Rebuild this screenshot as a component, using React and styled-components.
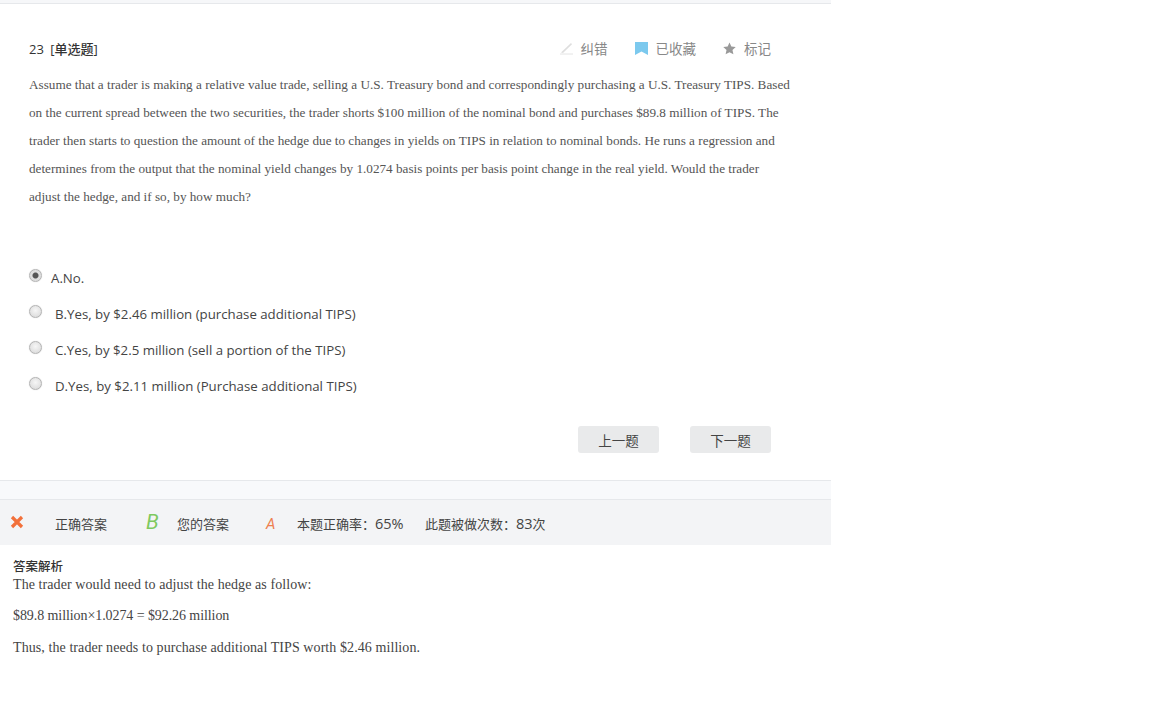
import styled, { createGlobalStyle } from 'styled-components'

const GlobalStyle = createGlobalStyle`
	html, body {
		margin: 0;
		padding: 0;
		background: #fff;
	}
	body {
		font-family: "Open Sans", "Noto Sans CJK SC", sans-serif;
		color: #333;
	}
`

const options = [
	{ id: 'A', text: 'A.No.', checked: true },
	{ id: 'B', text: 'B.Yes, by $2.46 million (purchase additional TIPS)' },
	{ id: 'C', text: 'C.Yes, by $2.5 million (sell a portion of the TIPS)' },
	{ id: 'D', text: 'D.Yes, by $2.11 million (Purchase additional TIPS)' },
]

function App() {
	return (
		<Page>
			<GlobalStyle />
			<TopBar />
			<Question>
				<Header>
					<Title>
						23 <b>[单选题]</b>
					</Title>
					<Tools>
						<Tool>
							<svg width="13" height="14" viewBox="0 0 13 14">
								<path d="M0 13h13" stroke="#e4e4e4" strokeWidth="1" />
								<path d="M1 11.500L11 2l1 1.200L3 12z" fill="#dedede" />
							</svg>
							<ToolLabel>纠错</ToolLabel>
						</Tool>
						<Tool>
							<svg width="13" height="13" viewBox="0 0 13 13">
								<path d="M0 0h13v13L6.500 9.500 0 13z" fill="#7cc9ee" />
							</svg>
							<ToolLabel>已收藏</ToolLabel>
						</Tool>
						<Tool>
							<svg width="13" height="13" viewBox="0 0 24 24">
								<path
									d="M12 1l3.400 7.400 8.100.9-6 5.500 1.700 8L12 18.700 4.800 22.800l1.700-8-6-5.500 8.100-.9z"
									fill="#999"
								/>
							</svg>
							<ToolLabel>标记</ToolLabel>
						</Tool>
					</Tools>
				</Header>
				<Stem>
					Assume that a trader is making a relative value trade, selling a U.S. Treasury bond and
					correspondingly purchasing a U.S. Treasury TIPS. Based on the current spread between the
					two securities, the trader shorts $100 million of the nominal bond and purchases $89.8
					million of TIPS. The trader then starts to question the amount of the hedge due to changes
					in yields on TIPS in relation to nominal bonds. He runs a regression and determines from
					the output that the nominal yield changes by 1.0274 basis points per basis point change in
					the real yield. Would the trader adjust the hedge, and if so, by how much?
				</Stem>
				<Options>
					{options.map(o => (
						<Option key={o.id}>
							<Radio type="radio" name="answer" defaultChecked={o.checked} />
							<OptionText $checked={o.checked}>{o.text}</OptionText>
						</Option>
					))}
				</Options>
				<Pager>
					<PageBtn>上一题</PageBtn>
					<PageBtn>下一题</PageBtn>
				</Pager>
			</Question>
			<Divider />
			<ResultBar>
				<ResultMark $width={45} $lift={-1}>
					<svg width="14" height="14" viewBox="0 0 14 14">
						<path d="M2 2l10 10M12 2L2 12" stroke="#f2703a" strokeWidth="3.200" />
					</svg>
				</ResultMark>
				<ResultLabel $width={91}>正确答案</ResultLabel>
				<ResultMark $color="#7ec95f" $size={21} $width={31} $lift={-2}>B</ResultMark>
				<ResultLabel $width={89}>您的答案</ResultLabel>
				<ResultMark $color="#ee7f4f" $size={15} $width={31} $lift={3}>A</ResultMark>
				<ResultLabel $width={128}>本题正确率：<Num>65%</Num></ResultLabel>
				<ResultLabel>此题被做次数：<Num>83</Num>次</ResultLabel>
			</ResultBar>
			<Analysis>
				<AnalysisTitle>答案解析</AnalysisTitle>
				<AnalysisText>The trader would need to adjust the hedge as follow:</AnalysisText>
				<AnalysisText $tight>$89.8 million×1.0274 = $92.26 million</AnalysisText>
				<AnalysisText>Thus, the trader needs to purchase additional TIPS worth $2.46 million.</AnalysisText>
			</Analysis>
		</Page>
	)
}
export default App

const Page = styled.div`
	width: 831px;
	height: 701px;
	overflow: hidden;
`
const TopBar = styled.div`
	height: 3px;
	background: #f6f7f9;
	border-bottom: 1px solid #e6e8eb;
`
const Question = styled.section`
	padding: 34px 0 27px 29px;
`
const Header = styled.div`
	display: flex;
	justify-content: space-between;
	align-items: center;
	height: 20px;
	padding-right: 60px;
`
const Title = styled.div`
	font-size: 13px;
	color: #333;
	b {
		font-weight: 500;
		margin-left: 3px;
	}
`
const Tools = styled.div`
	display: flex;
	align-items: center;
	gap: 27px;
`
const Tool = styled.span`
	display: flex;
	align-items: center;
	gap: 8px;
	font-size: 13.5px;
	color: #888;
`
const ToolLabel = styled.span`
	font-family: "Noto Sans CJK SC", sans-serif;
`
const Stem = styled.p`
	width: 763px;
	margin: 13px 0 0;
	font-family: "Liberation Serif", serif;
	font-size: 13.2px;
	line-height: 28px;
	color: #555;
`
const Options = styled.div`
	margin-top: 49px;
`
const Option = styled.label`
	display: flex;
	align-items: center;
	height: 36px;
`
const Radio = styled.input`
	appearance: none;
	flex: none;
	width: 13px;
	height: 13px;
	margin: -5px 0 0;
	border-radius: 50%;
	border: 1px solid #b4b4b4;
	background: radial-gradient(circle at 50% 40%, #f6f6f6, #d6d6d6);
	box-shadow: 0 0 1px #ccc;
	box-sizing: border-box;
	&:checked {
		background: radial-gradient(circle, #555 0 2.500px, #dedede 3.500px);
	}
`
const OptionText = styled.span`
	margin-left: ${p => (p.$checked ? '9px' : '13px')};
	font-size: 13.25px;
	color: #444;
`
const Pager = styled.div`
	display: flex;
	justify-content: flex-end;
	gap: 31px;
	margin-top: 22px;
	padding-right: 60px;
`
const PageBtn = styled.button`
	width: 81px;
	height: 27px;
	padding: 0;
	border: 0;
	border-radius: 3px;
	background: #e9eaeb;
	font-family: "Noto Sans CJK SC", sans-serif;
	font-size: 13.5px;
	color: #444;
`
const Divider = styled.div`
	height: 18px;
	background: #f8f9fb;
	border-top: 1px solid #e6e8eb;
	border-bottom: 1px solid #e6e8eb;
`
const ResultBar = styled.div`
	display: flex;
	align-items: center;
	height: 45px;
	background: #f3f4f6;
	padding-left: 10px;
`
const ResultMark = styled.span`
	display: flex;
	align-items: center;
	width: ${p => p.$width}px;
	height: 30px;
	margin-top: ${p => p.$lift}px;
	font-family: Roboto, sans-serif;
	font-weight: 400;
	font-style: italic;
	font-size: ${p => p.$size}px;
	color: ${p => p.$color};
`
const ResultLabel = styled.span`
	width: ${p => (p.$width ? `${p.$width}px` : 'auto')};
	margin-top: 1px;
	font-size: 13px;
	color: #444;
`
const Num = styled.span`
	font-size: 14.5px;
`
const Analysis = styled.section`
	padding: 12px 13px 0;
`
const AnalysisTitle = styled.div`
	font-family: "Noto Sans CJK SC", sans-serif;
	font-size: 12.500px;
	font-weight: 500;
	line-height: 18px;
	color: #333;
`
const AnalysisText = styled.p`
	margin: 0 0 12px;
	font-family: "Liberation Serif", serif;
	font-size: 14px;
	letter-spacing: ${p => (p.$tight ? '-0.08px' : '0.08px')};
	line-height: 20px;
	color: #444;
	&:first-of-type {
		margin-bottom: 11px;
	}
`
